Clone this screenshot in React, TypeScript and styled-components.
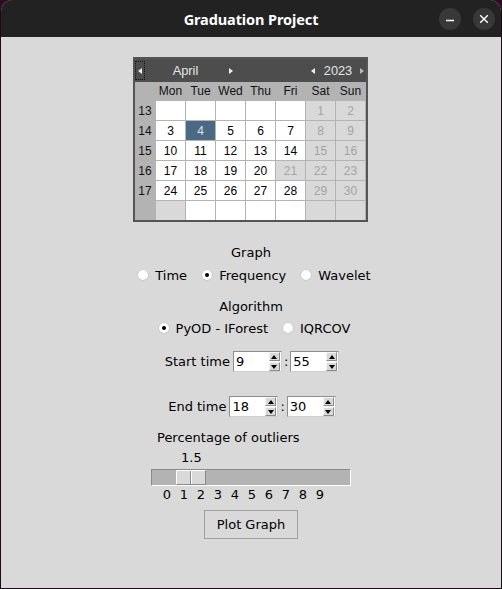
import React from 'react';
import styled, { createGlobalStyle } from 'styled-components';

const Global = createGlobalStyle`
  html, body { margin: 0; padding: 0; background: #2f0b24; }
  body { width: 502px; height: 589px; overflow: hidden; }
  * { box-sizing: border-box; }
`;

const Window = styled.div`
  width: 502px;
  height: 589px;
  display: flex;
  flex-direction: column;
  background: #d9d9d9;
  border: 1px solid #1a0c15;
  border-top: none;
  border-radius: 12px 12px 0 0;
  overflow: hidden;
`;

const TitleBar = styled.div`
  height: 37px;
  flex: none;
  background: #222222;
  display: grid;
  grid-template-columns: 1fr auto 1fr;
  align-items: center;
`;

const Title = styled.div`
  grid-column: 2;
  color: #ffffff;
  font-family: "Noto Sans", "Open Sans", sans-serif;
  font-weight: 700;
  font-size: 14.5px;
  letter-spacing: -0.1px;
`;

const WinButtons = styled.div`
  grid-column: 3;
  justify-self: end;
  display: flex;
  gap: 12px;
  padding-right: 6px;
  padding-top: 1px;
`;

const WinButton = styled.div`
  width: 22px;
  height: 22px;
  border-radius: 50%;
  background: #383838;
  display: flex;
  align-items: center;
  justify-content: center;
`;

const Content = styled.div`
  flex: 1;
  display: flex;
  flex-direction: column;
  align-items: center;
  font-family: "DejaVu Sans", sans-serif;
  font-size: 13px;
  color: #000;
`;

/* Calendar */
const Calendar = styled.div`
  margin-top: 20px;
  margin-right: 1px;
  width: 235px;
  border: 2px solid #555555;
  background: #b3b3b3;
  font-family: "Liberation Sans", Arial, sans-serif;
  font-size: 12px;
`;

const CalHeader = styled.div`
  height: 23px;
  background: #4d4d4d;
  display: grid;
  grid-template-columns: 10px 81px 10px 1fr 10px 40px 8px;
  align-items: center;
  color: #e6e6e6;
  font-size: 12.8px;
`;

const NavBtn = styled.div<{ $focus?: boolean }>`
  height: 19px;
  display: flex;
  align-items: center;
  justify-content: center;
  outline: ${(p) => (p.$focus ? '1px dotted #111' : 'none')};
  outline-offset: -1px;
`;

const Tri = styled.span<{ $dir: 'l' | 'r'; $c?: string }>`
  width: 0;
  height: 0;
  border-top: 3px solid transparent;
  border-bottom: 3px solid transparent;
  ${(p) =>
    p.$dir === 'l'
      ? `border-right: 4px solid ${p.$c || '#f0f0f0'};`
      : `border-left: 4px solid ${p.$c || '#f0f0f0'};`}
`;

const HeadLabel = styled.div`
  text-align: center;
  line-height: 23px;
`;

const CalGrid = styled.div`
  display: grid;
  grid-template-columns: 20px repeat(7, 29px);
  grid-template-rows: 18px repeat(6, 19px);
  gap: 1px;
  width: 231px;
  background: #b3b3b3;
`;

const DayName = styled.div`
  display: flex;
  align-items: center;
  justify-content: center;
  color: #111;
`;

const WeekNum = styled.div`
  display: flex;
  align-items: center;
  justify-content: center;
  color: #111;
`;

type Kind = 'normal' | 'weekend' | 'selected';

const Cell = styled.div<{ $kind: Kind }>`
  display: flex;
  align-items: center;
  justify-content: center;
  background: ${(p) =>
    p.$kind === 'selected' ? '#4a6984' : p.$kind === 'weekend' ? '#d9d9d9' : '#ffffff'};
  color: ${(p) =>
    p.$kind === 'selected' ? '#e2e2e2' : p.$kind === 'weekend' ? '#a3a3a3' : '#000'};
`;

/* Labels and radios */
const SectionLabel = styled.div<{ $mt: number }>`
  margin-top: ${(p) => p.$mt}px;
  line-height: 16px;
`;

const RadioRow = styled.div<{ $mt: number }>`
  margin-top: ${(p) => p.$mt}px;
  height: 20px;
  display: flex;
  align-items: center;
  gap: 15px;
  padding-left: 7px;
`;

const RadioItem = styled.label`
  display: flex;
  align-items: center;
  gap: 7px;
  white-space: nowrap;
`;

const RadioDot = styled.span<{ $on?: boolean }>`
  width: 10px;
  height: 10px;
  border-radius: 50%;
  background: #ffffff;
  box-shadow: 0 0 0 0.5px #bdbdbd;
  display: flex;
  align-items: center;
  justify-content: center;
  &::after {
    content: '';
    width: 4px;
    height: 4px;
    border-radius: 50%;
    background: ${(p) => (p.$on ? '#000' : 'transparent')};
  }
`;

/* Time rows */
const TimeRow = styled.div<{ $mt: number; $shift: number }>`
  margin-top: ${(p) => p.$mt}px;
  padding-left: ${(p) => p.$shift}px;
  height: 21px;
  display: flex;
  align-items: center;
`;

const TimeLabel = styled.span`
  margin-right: 3px;
`;

const Colon = styled.span`
  margin: 0 2px 0 2px;
`;

const Spin = styled.div`
  width: 49px;
  height: 21px;
  background: #fff;
  border: 1px solid #8e8e8e;
  border-right-color: #cfcfcf;
  border-bottom-color: #cfcfcf;
  display: flex;
  align-items: stretch;
  padding: 0 1px 0 0;
`;

const SpinText = styled.div`
  flex: 1;
  padding-left: 2px;
  line-height: 19px;
`;

const SpinArrows = styled.div`
  width: 11px;
  display: flex;
  flex-direction: column;
  gap: 1px;
`;

const SpinBtn = styled.div`
  flex: 1;
  background: #d9d9d9;
  border: 1px solid #f4f4f4;
  border-right-color: #8a8a8a;
  border-bottom-color: #8a8a8a;
  display: flex;
  align-items: center;
  justify-content: center;
`;

const VTri = styled.span<{ $up?: boolean }>`
  width: 0;
  height: 0;
  border-left: 3.5px solid transparent;
  border-right: 3.5px solid transparent;
  ${(p) => (p.$up ? 'border-bottom: 4px solid #000;' : 'border-top: 4px solid #000;')}
`;

/* Scale */
const Scale = styled.div`
  margin-top: 13px;
  width: 200px;
  display: flex;
  flex-direction: column;
`;

const ScaleLabel = styled.div`
  padding-left: 6px;
  line-height: 16px;
`;

const ScaleValue = styled.div<{ $left: number }>`
  margin-top: 4px;
  padding-left: ${(p) => p.$left}px;
  line-height: 16px;
`;

const Trough = styled.div`
  margin-top: 3px;
  height: 17px;
  background: #b3b3b3;
  border: 1px solid #8a8a8a;
  border-bottom-color: #ffffff;
  border-right-color: #ffffff;
  display: flex;
  align-items: stretch;
`;

const Thumb = styled.div<{ $left: number }>`
  margin-left: ${(p) => p.$left}px;
  width: 30px;
  background: #d9d9d9;
  border: 1px solid #ffffff;
  border-right-color: #8a8a8a;
  border-bottom-color: #8a8a8a;
  display: flex;
  justify-content: center;
`;

const ThumbGroove = styled.div`
  width: 2px;
  border-left: 1px solid #8a8a8a;
  border-right: 1px solid #ffffff;
`;

const Ticks = styled.div`
  margin-top: 1px;
  display: flex;
  padding-left: 7.5px;
  line-height: 16px;
`;

const Tick = styled.span`
  width: 17px;
  text-align: center;
`;

const PlotButton = styled.button`
  margin-top: 7px;
  width: 94px;
  height: 29px;
  background: #d9d9d9;
  border: 1px solid #a0a0a0;
  font-family: "DejaVu Sans", sans-serif;
  font-size: 13px;
  color: #000;
  padding: 0;
`;

const weeks: { wk: number; days: (number | null)[] }[] = [
  { wk: 13, days: [null, null, null, null, null, 1, 2] },
  { wk: 14, days: [3, 4, 5, 6, 7, 8, 9] },
  { wk: 15, days: [10, 11, 12, 13, 14, 15, 16] },
  { wk: 16, days: [17, 18, 19, 20, 21, 22, 23] },
  { wk: 17, days: [24, 25, 26, 27, 28, 29, 30] },
  { wk: 0, days: [null, null, null, null, null, null, null] },
];

const kindFor = (d: number | null, col: number, row: number): Kind => {
  if (d === 4) return 'selected';
  if (col >= 5) return 'weekend';
  if (d === 21) return 'weekend';
  if (row === 5 && col === 0) return 'weekend';
  return 'normal';
};

const Spinbox: React.FC<{ value: string }> = ({ value }) => (
  <Spin>
    <SpinText>{value}</SpinText>
    <SpinArrows>
      <SpinBtn>
        <VTri $up />
      </SpinBtn>
      <SpinBtn>
        <VTri />
      </SpinBtn>
    </SpinArrows>
  </Spin>
);

export default function App() {
  const dayNames = ['Mon', 'Tue', 'Wed', 'Thu', 'Fri', 'Sat', 'Sun'];
  return (
    <>
      <Global />
      <Window>
        <TitleBar>
          <Title>Graduation Project</Title>
          <WinButtons>
            <WinButton>
              <svg width="10" height="10" viewBox="0 0 10 10">
                <line x1="1" y1="6.5" x2="9" y2="6.5" stroke="#fff" strokeWidth="1.4" />
              </svg>
            </WinButton>
            <WinButton>
              <svg width="10" height="10" viewBox="0 0 10 10">
                <path d="M1.2 1.2 L8.8 8.8 M8.8 1.2 L1.2 8.8" stroke="#fff" strokeWidth="1.4" />
              </svg>
            </WinButton>
          </WinButtons>
        </TitleBar>
        <Content>
          <Calendar>
            <CalHeader>
              <NavBtn $focus>
                <Tri $dir="l" />
              </NavBtn>
              <HeadLabel>April</HeadLabel>
              <NavBtn>
                <Tri $dir="r" />
              </NavBtn>
              <div />
              <NavBtn>
                <Tri $dir="l" />
              </NavBtn>
              <HeadLabel>2023</HeadLabel>
              <NavBtn>
                <Tri $dir="r" $c="#b8b8b8" />
              </NavBtn>
            </CalHeader>
            <CalGrid>
              <DayName />
              {dayNames.map((d) => (
                <DayName key={d}>{d}</DayName>
              ))}
              {weeks.map((w, r) => (
                <React.Fragment key={r}>
                  <WeekNum>{w.wk ? w.wk : ''}</WeekNum>
                  {w.days.map((d, c) => (
                    <Cell key={c} $kind={kindFor(d, c, r)}>
                      {d ?? ''}
                    </Cell>
                  ))}
                </React.Fragment>
              ))}
            </CalGrid>
          </Calendar>

          <SectionLabel $mt={23}>Graph</SectionLabel>
          <RadioRow $mt={4}>
            <RadioItem>
              <RadioDot />
              Time
            </RadioItem>
            <RadioItem>
              <RadioDot $on />
              Frequency
            </RadioItem>
            <RadioItem>
              <RadioDot />
              Wavelet
            </RadioItem>
          </RadioRow>

          <SectionLabel $mt={14}>Algorithm</SectionLabel>
          <RadioRow $mt={3}>
            <RadioItem>
              <RadioDot $on />
              PyOD - IForest
            </RadioItem>
            <RadioItem>
              <RadioDot />
              IQRCOV
            </RadioItem>
          </RadioRow>

          <TimeRow $mt={13} $shift={2}>
            <TimeLabel>Start time</TimeLabel>
            <Spinbox value="9" />
            <Colon>:</Colon>
            <Spinbox value="55" />
          </TimeRow>

          <TimeRow $mt={24} $shift={2}>
            <TimeLabel>End time</TimeLabel>
            <Spinbox value="18" />
            <Colon>:</Colon>
            <Spinbox value="30" />
          </TimeRow>

          <Scale>
            <ScaleLabel>Percentage of outliers</ScaleLabel>
            <ScaleValue $left={30}>1.5</ScaleValue>
            <Trough>
              <Thumb $left={24}>
                <ThumbGroove />
              </Thumb>
            </Trough>
            <Ticks>
              {[0, 1, 2, 3, 4, 5, 6, 7, 8, 9].map((n) => (
                <Tick key={n}>{n}</Tick>
              ))}
            </Ticks>
          </Scale>

          <PlotButton>Plot Graph</PlotButton>
        </Content>
      </Window>
    </>
  );
}
